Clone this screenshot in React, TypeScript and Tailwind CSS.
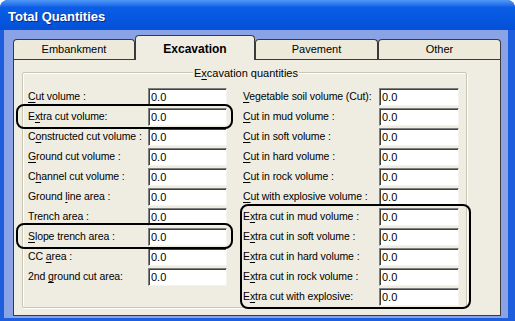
type Label = [string, string, string];

const leftRows: Label[] = [
  ["", "C", "ut volume :"],
  ["E", "x", "tra cut volume:"],
  ["C", "o", "nstructed cut volume :"],
  ["", "G", "round cut volume :"],
  ["C", "h", "annel cut volume :"],
  ["Ground ", "l", "ine area :"],
  ["Trench area :", "", ""],
  ["", "S", "lope trench area :"],
  ["CC ", "a", "rea :"],
  ["2nd ", "g", "round cut area:"],
];

const rightRows: Label[] = [
  ["", "V", "egetable soil volume (Cut):"],
  ["", "C", "ut in mud volume :"],
  ["", "C", "ut in soft volume :"],
  ["", "C", "ut in hard volume :"],
  ["", "C", "ut in rock volume :"],
  ["", "C", "ut with explosive volume :"],
  ["E", "x", "tra cut in mud volume :"],
  ["E", "x", "tra cut in soft volume :"],
  ["E", "x", "tra cut in hard volume :"],
  ["E", "x", "tra cut in rock volume :"],
  ["E", "x", "tra cut with explosive:"],
];

function Text({ l }: { l: Label }) {
  return (
    <span className="whitespace-nowrap">
      {l[0]}
      {l[1] && <span className="underline underline-offset-2">{l[1]}</span>}
      {l[2]}
    </span>
  );
}

function Field({ label, labelW, inputW }: { label: Label; labelW: string; inputW: string }) {
  return (
    <div className="flex items-center h-[18px] mb-[2px]">
      <div className={`${labelW} shrink-0 tracking-[-0.1px]`}>
        <Text l={label} />
      </div>
      <div
        className={`${inputW} h-[18px] text-[11px] bg-white border border-t-[#7f7f7f] border-l-[#7f7f7f] border-b-[#f4f3ee] border-r-[#f4f3ee] shadow-[inset_1px_1px_0_#404040] flex items-center pl-[2px] pt-[1px]`}
      >
        0.0
      </div>
    </div>
  );
}

const tabs = [
  { name: "Embankment", w: "w-[122px]" },
  { name: "Excavation", w: "w-[120px]", active: true },
  { name: "Pavement", w: "w-[123px]" },
  { name: "Other", w: "w-[123px]" },
];

export default function App() {
  return (
    <div className="relative w-[515px] h-[321px] bg-white overflow-hidden text-[10.5px] text-black font-['Liberation_Sans',Arial,sans-serif]">
      <div className="w-full h-full flex flex-col rounded-t-[8px] overflow-hidden bg-[#1c5ede]">
        {/* title bar */}
        <div className="h-[30px] shrink-0 flex items-center pl-[8px] pt-[4px] bg-linear-to-b from-[#4f98f7] via-[#0b5de6] via-25% to-[#0450d8]">
          <span className="text-white font-bold text-[13px] [text-shadow:1px_1px_0_#0a2a80]">Total Quantities</span>
        </div>

        {/* body */}
        <div className="flex-1 flex flex-col ml-[4px] mr-[7px] mb-[3px] bg-[#8aa3e6] pl-[9px] pt-[5px]">
          <div className="flex items-end h-[24px] relative z-10">
            {tabs.map((t) =>
              t.active ? (
                <div
                  key={t.name}
                  className={`${t.w} h-[25px] -mb-[1px] pt-[2px] flex items-center justify-center text-[12px] font-bold bg-[#efede2] border border-b-0 border-[#3a3a3a] rounded-t-[4px]`}
                >
                  {t.name}
                </div>
              ) : (
                <div
                  key={t.name}
                  className={`${t.w} h-[20px] text-[11px] flex items-center justify-center bg-[#edeadc] border border-b-0 border-[#3a3a3a] rounded-t-[4px]`}
                >
                  {t.name}
                </div>
              ),
            )}
          </div>

          {/* panel */}
          <div className="w-[488px] h-[257px] bg-[#efede2] border border-[#3a3a3a] pl-[8px] pt-[12px]">
            <div className="relative w-[445px] h-[236px] border border-[#c9c6b5] rounded-[2px] shadow-[1px_1px_0_#ffffff,inset_1px_1px_0_#ffffff] pt-[15px] pl-[5px] flex">
              <span className="absolute top-[-8px] left-[170px] px-[1px] text-[11px] bg-[#efede2]">
                E<span className="underline underline-offset-2">x</span>cavation quantities
              </span>
              <div className="flex flex-col">
                {leftRows.map((l, i) => (
                  <Field key={i} label={l} labelW="w-[120px]" inputW="w-[79px]" />
                ))}
              </div>
              <div className="flex flex-col ml-[16px]">
                {rightRows.map((l, i) => (
                  <Field key={i} label={l} labelW="w-[136px]" inputW="w-[80px]" />
                ))}
              </div>
            </div>
          </div>
        </div>
      </div>

      {/* annotation outlines */}
      <div className="absolute left-[16px] top-[104px] w-[217px] h-[25px] border-2 border-black rounded-[8px]" />
      <div className="absolute left-[16px] top-[223px] w-[217px] h-[26px] border-2 border-black rounded-[8px]" />
      <div className="absolute left-[240px] top-[204px] w-[231px] h-[105px] border-2 border-black rounded-[8px]" />
    </div>
  );
}
